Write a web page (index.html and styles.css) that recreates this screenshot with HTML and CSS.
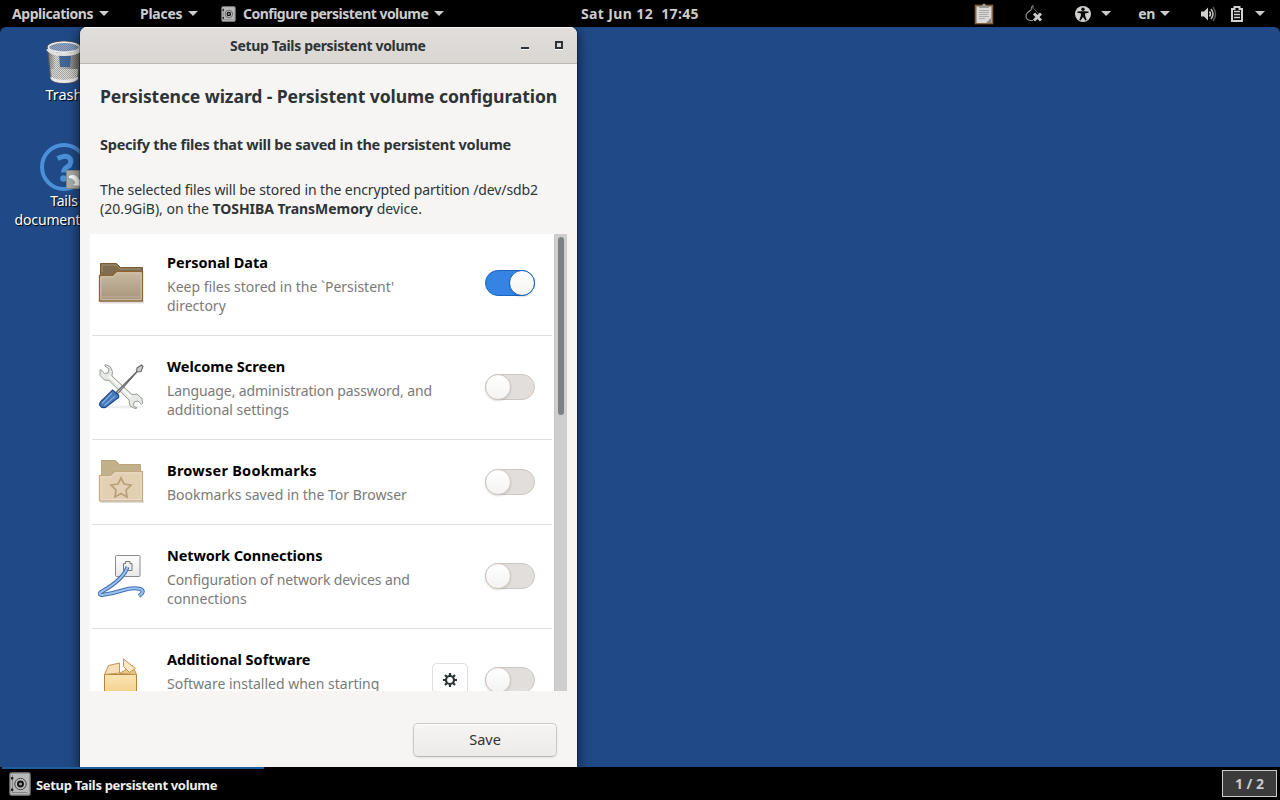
FILE: index.html
```html
<!DOCTYPE html>
<html lang="en">
<head>
<meta charset="utf-8">
<title>Setup Tails persistent volume</title>
<link rel="stylesheet" href="styles.css">
</head>
<body>
<svg width="0" height="0" class="defs">
  <defs>
    <linearGradient id="folder" x2="0" y2="1"><stop stop-color="#c9baa2"/><stop offset="1" stop-color="#a6937a"/></linearGradient>
    <linearGradient id="metal" x2="1" y2="0"><stop stop-color="#777"/><stop offset=".25" stop-color="#e0e0de"/><stop offset=".6" stop-color="#aaa"/><stop offset="1" stop-color="#666"/></linearGradient>
    <linearGradient id="box" x2="0" y2="1"><stop stop-color="#fbe5b4"/><stop offset="1" stop-color="#efc77c"/></linearGradient>
    <linearGradient id="plate" x2="0" y2="1"><stop stop-color="#fff"/><stop offset="1" stop-color="#e7e8e6"/></linearGradient>
    <pattern id="mesh" width="2" height="2" patternUnits="userSpaceOnUse"><path d="M0 0h1v1H0zM1 1h1v1H1z" fill="#555" fill-opacity=".4"/></pattern>
    <symbol id="safe" viewBox="0 0 22 24">
      <rect x="1" y="1" width="20" height="22" rx="1.5" fill="#b9b9b9" stroke="#8b8b8b" stroke-width="1.4"/>
      <path d="M3.500 3v18M3.500 20.500h15" fill="none" stroke="#777" stroke-width=".8"/>
      <circle cx="11.500" cy="12" r="5.700" fill="#bbb" stroke="#444" stroke-width="1"/>
      <circle cx="11.500" cy="12" r="2.500" fill="#999" stroke="#111" stroke-width="1.900"/>
      <path d="M2 5h2.300v2.500H2zM2 16.500h2.300V19H2z" fill="#222"/>
    </symbol>
  </defs>
</svg>

<header class="topbar">
  <span class="menu applications">Applications</span><i class="caret"></i>
  <span class="menu places">Places</span><i class="caret"></i>
  <svg class="app-icon" width="15" height="16"><use href="#safe"/></svg>
  <span class="menu current">Configure persistent volume</span><i class="caret"></i>
  <span class="menu clock">Sat Jun 12&nbsp; 17:45</span>
  <div class="tray">
    <svg width="20" height="22" viewBox="0 0 20 22"><rect x="1.500" y="2.500" width="17" height="18" fill="#bbb" stroke="#876037" stroke-width="1.600"/><path d="M3 4h14v12l-3 4H3z" fill="#d9d9d7"/><path d="M5 7.500h10M5 9.500h10M5 11.500h9M5 13.500h10M5 15.500h6" stroke="#aaa"/><path d="M17 15l-5 5h5z" fill="#888"/><path d="M5 5V3h3q0-2.500 2-2.500T12 3h3v2z" fill="#999b96"/></svg>
    <svg class="tor" width="17" height="17" viewBox="0 0 17 17"><path d="M8 .5Q6 2.500 6 5Q1 8 1 11Q1 15.500 6.500 15.500H8" fill="none" stroke="#999" stroke-width="1.100"/><path d="M8 .5Q8 4 11 6q2.500 2 2.500 3M8 .5L6.500 5" fill="none" stroke="#555"/><path d="M9 8.500l7 7M16 8.500l-7 7" stroke="#ccc" stroke-width="3"/></svg>
    <svg class="access" width="16" height="16" viewBox="0 0 16 16"><circle cx="8" cy="8" r="8" fill="#d0d0ce"/><circle cx="8" cy="3.300" r="1.700"/><path d="M2.500 5.500l4-.2h3l4 .2v1.300l-3.500.7.2 2.500 1.500 4-1.300.6L8 11l-2.400 3.600-1.300-.6 1.500-4 .2-2.500-3.500-.7z"/></svg>
    <i class="caret"></i>
    <span class="menu lang">en</span><i class="caret"></i>
    <svg class="volume" width="17" height="16" viewBox="0 0 17 16"><path d="M1 5.500h3l4-4v13l-4-4H1z" fill="#d0d0ce"/><path d="M9.500 5.500q2 2.500 0 5" fill="none" stroke="#d0d0ce" stroke-width="1.500"/><path d="M11 3q4 5 0 10" fill="none" stroke="#bbb" stroke-width="1.600"/><path d="M13 1q5 7 0 14" fill="none" stroke="#555" stroke-width="1.500"/></svg>
    <svg class="battery" width="12" height="16" viewBox="0 0 12 16"><path d="M1 3h2.500V1h5v2H11v12H1z" fill="none" stroke="#d0d0ce" stroke-width="2"/><path d="M3 5.500h6M3 8.500h6M3 11.500h6" stroke="#d0d0ce" stroke-width="1.500"/></svg>
    <i class="caret"></i>
  </div>
</header>

<main class="desktop">
  <div class="shortcut trash">
    <svg width="36" height="44" viewBox="0 0 36 44"><path d="M1.500 7l3 32q1 4 14 4t14-4L35 7z" fill="url(#metal)" stroke="#555"/><path d="M5 29h27l-1 10q-12 5-25 0z" fill="#d8d8d6"/><path d="M13 14h12l-1 13H14z" fill="#315fa0" opacity=".9"/><path d="M2 10l3 29q12 6 26 0l3-29z" fill="url(#mesh)"/><path d="M4 37q14 6 28 0v2q-4 4-14 4T5 39z" fill="#e8e8e6"/><ellipse cx="18" cy="7" rx="17" ry="6" fill="#8da6c9" stroke="#4c4f4e" stroke-width="1.200"/><ellipse cx="18" cy="7.200" rx="15.500" ry="5" fill="url(#mesh)" stroke="#f0f0ee" stroke-width="1.500"/><path d="M1.500 9q3 5.500 16.500 5.500t17-5.500" fill="none" stroke="#e1e1df" stroke-width="3"/></svg>
    <span>Trash</span>
  </div>
  <div class="shortcut docs">
    <svg width="48" height="48" viewBox="0 0 48 48"><circle cx="24" cy="24" r="22" fill="none" stroke="#4a90d9" stroke-width="4"/><path d="M17.500 15.500q8-4 11.500-1t.5 8q-6 3-6 7" fill="none" stroke="#4a90d9" stroke-width="5"/><circle cx="23.500" cy="35.500" r="3.300" fill="#4a90d9"/><rect x="26.500" y="27.500" width="20" height="18" fill="#aaaea5" stroke="#868a82"/><path d="M29 33q7-3 10 4l2-2v8l-8-1 2.500-2q-2-5-6.500-5z" fill="#fff"/></svg>
    <span>Tails<br>documentation</span>
  </div>

  <section class="window">
    <div class="titlebar">
      <span class="title">Setup Tails persistent volume</span>
      <i class="minimize"></i><i class="maximize"></i>
    </div>
    <div class="intro">
      <h1>Persistence wizard - Persistent volume configuration</h1>
      <h2>Specify the files that will be saved in the persistent volume</h2>
      <p><span class="snug">The selected files will be stored in the encrypted partition /dev/sdb2</span><br><span>(20.9GiB), on the <b>TOSHIBA TransMemory</b> device.</span></p>
    </div>
    <div class="scroller">
      <div class="list">
        <div class="row">
          <svg class="icon" width="48" height="48" viewBox="0 0 48 48"><path d="M2 44.500h44" stroke="#ddd" stroke-width="2"/><path d="M2.500 42V5.500h16l4 4h22V42z" fill="#806d50" stroke="#785a32"/><path d="M4 14V7h14l4 4h21" fill="none" stroke="#a19072"/><path d="M1.500 43V17.500h13l4-4h26V43z" fill="url(#folder)" stroke="#8b6431" stroke-width="1.300"/><path d="M2.800 41.700V18.800h12.400l4-4h24v26.900z" fill="none" stroke="#d5c9b5" stroke-width=".9"/><path d="M4 39h39" stroke="#bfae96"/></svg>
          <div class="copy"><h3>Personal Data</h3><p><span>Keep files stored in the `Persistent'</span><br><span>directory</span></p></div>
          <div class="switch on"><i></i></div>
        </div>
        <div class="row">
          <svg class="icon" width="48" height="48" viewBox="0 0 48 48"><ellipse cx="26" cy="45" rx="20" ry="1.500" fill="#eee"/><path d="M7 2.500l5 2 2.500 5-.5 4.500 20 18.500 5-.5 5 4.500.5 5-1 1-3.500-3.500-4 1-.5 4 3.500 2-2 .5-5-2.500-1-6L11 18.500l-4.500-.5L2 13.500V8l1-.5 3.500 4 3.500-.5L11 7 7 4z" fill="#e6e8e5" stroke="#989c96" stroke-width="1"/><path d="M11 14l22 21" stroke="#fff" stroke-width="1.500"/><path d="M18 30.500L38.500 10l.5-4 4.500-3 1.500 1.500-2 5-4 .5L19.500 32z" fill="#ccc" stroke="#646762" stroke-width="1.100"/><path d="M14.500 28l6 5q1 3-2 4L7.500 45.500q-4 1-6-2.500 0-3 4-6z" fill="#4479bd" stroke="#234d85" stroke-width="1.200"/><path d="M14 31L4 41.500M17 34L6.500 43.500" stroke="#83a9da" stroke-width="1.200"/></svg>
          <div class="copy"><h3>Welcome Screen</h3><p><span class="snug">Language, administration password, and</span><br><span>additional settings</span></p></div>
          <div class="switch"><i></i></div>
        </div>
        <div class="row bookmarks">
          <svg class="icon" width="48" height="48" viewBox="0 0 48 48"><path d="M2 45h44" stroke="#ddd" stroke-width="2"/><path d="M3.500 42V3.500h14l4 4h21V42z" fill="#c2b08b" stroke="#bba77e"/><path d="M1.500 44V18.500h11l4-4h28V44z" fill="#e2cfb4" stroke="#c2aa7e" stroke-width="1.200"/><path d="M3 42.500V20h10l4-4h26v26.500z" fill="none" stroke="#ecdcc7"/><path d="M23 21l3 6 7 1-5 5 1 7-6-3.500-6 3.500 1-7-5-5 7-1z" fill="#e3d0b6" stroke="#b99f78" stroke-width="1.700"/></svg>
          <div class="copy"><h3 class="loose">Browser Bookmarks</h3><p><span>Bookmarks saved in the Tor Browser</span></p></div>
          <div class="switch"><i></i></div>
        </div>
        <div class="row low">
          <svg class="icon" width="48" height="48" viewBox="0 0 48 48"><rect x="17.500" y="2.500" width="24.500" height="21" rx="1" fill="url(#plate)" stroke="#8a8c89"/><path d="M25.500 17.500v-7h2v-2h4.500v2h2v7z" fill="#eee" stroke="#777"/><path d="M29.500 14Q25 27 3 39q-3 3 1 3 9-1 20-4.500t18-1.500q6 2-1 7" fill="none" stroke="#3f70b2" stroke-width="4"/><path d="M29.500 14Q25 27 3 39q-3 3 1 3 9-1 20-4.500t18-1.500q6 2-1 7" fill="none" stroke="#9dc1ee" stroke-width="2"/></svg>
          <div class="copy"><h3 class="snug">Network Connections</h3><p><span class="snug">Configuration of network devices and</span><br><span>connections</span></p></div>
          <div class="switch"><i></i></div>
        </div>
        <div class="row low">
          <svg class="icon" width="48" height="48" viewBox="0 0 48 48"><path d="M6.500 17.500h32v27h-32z" fill="url(#box)" stroke="#ba8435"/><path d="M6.500 17.500l4-9 11-2.500v10z" fill="#f4dfb8" stroke="#c4954e"/><path d="M38.500 17.500l-4-9-13 8z" fill="#e9c78b" stroke="#c4954e"/><path d="M25.500 2l12 9.500-6 4-6-6z" fill="#fae8c5" stroke="#c4954e"/></svg>
          <div class="copy"><h3>Additional Software</h3><p><span>Software installed when starting</span><br>&nbsp;</p></div>
          <div class="gear"><svg width="14" height="14" viewBox="0 0 14 14"><circle cx="7" cy="7" r="4" fill="none" stroke="#2e3436" stroke-width="2.200"/><path d="M7 0v3M7 11v3M0 7h3M11 7h3M2 2l2 2M10 10l2 2M2 12l2-2M10 4l2-2" stroke="#2e3436" stroke-width="2.200"/></svg></div>
          <div class="switch"><i></i></div>
        </div>
      </div>
      <div class="scrollbar"><i></i></div>
    </div>
    <div class="actions"><button><span>Save</span></button></div>
  </section>
</main>

<footer class="taskbar">
  <div class="task"><svg width="22" height="24"><use href="#safe"/></svg><span>Setup Tails persistent volume</span></div>
  <div class="workspace">1 / 2</div>
</footer>
</body>
</html>
```
FILE: styles.css
```css
* { box-sizing: border-box; }
body { margin: 0; width: 1280px; height: 800px; overflow: hidden; background: #000; font: 14.5px/19px "Noto Sans", sans-serif; color: #2e3436; display: flex; flex-direction: column; }
h1, h2, h3, p { margin: 0; }
span { white-space: nowrap; }
.defs { position: absolute; }
svg { display: block; flex: none; }
.snug { letter-spacing: -.1px; }
.loose { letter-spacing: .25px; }

.topbar { height: 27px; flex: none; display: flex; align-items: center; padding-left: 12px; color: #ccc; }
.menu { font-weight: 700; font-size: 14px; line-height: 27px; flex: none; }
.applications { width: 87px; letter-spacing: -.45px; }
.places { width: 43px; letter-spacing: -.25px; margin-right: 5px; }
.current { width: 186px; letter-spacing: -.52px; margin-right: 5px; }
.caret { width: 10px; height: 5px; flex: none; background: #ccc; clip-path: polygon(0 0, 100% 0, 50% 100%); }
.applications + .caret { margin-right: 31px; }
.places + .caret { margin-right: 23px; }
.app-icon { margin-right: 7px; }
.clock { margin-left: 137px; letter-spacing: .4px; }
.clock { letter-spacing: .38px; }
.tray { margin-left: auto; display: flex; align-items: center; padding-right: 15px; }
.tor { margin-left: 31px; }
.access { margin: 0 10px 0 33px; }
.lang { margin: 0 5px 0 27px; letter-spacing: -.3px; }
.volume { margin-left: 30px; }
.battery { margin: 0 12px 0 14px; }

.desktop { height: 740px; flex: none; background: #204a87; border-radius: 6px 6px 0 0; position: relative; overflow: hidden; }
.shortcut { position: absolute; width: 110px; left: 9px; display: flex; flex-direction: column; align-items: center; text-align: center; color: #fff; text-shadow: 1px 1px 1px #000; }
.trash { top: 13px; }
.trash span { margin-top: 1px; }
.docs { top: 116px; font-size: 14px; letter-spacing: -.15px; }

.window { position: absolute; left: 80px; top: 0; width: 497px; height: 740px; background: #f6f5f4; border-radius: 7px 7px 0 0; box-shadow: 0 0 0 1px rgba(0,0,0,.25), 0 3px 12px 2px rgba(0,0,0,.5); display: flex; flex-direction: column; overflow: hidden; }
.titlebar { height: 37px; flex: none; background: linear-gradient(#e1dedb, #dad6d2); border-bottom: 1px solid #bfb8b1; box-shadow: inset 0 1px #f9f8f8; display: flex; align-items: center; padding-left: 150px; }
.title { font-weight: 700; font-size: 14px; width: 196px; letter-spacing: -.33px; }
.minimize { width: 8px; height: 2px; background: #2e3436; margin: 5px 0 0 95px; box-shadow: 0 1px #fff; }
.maximize { width: 8px; height: 8px; border: 2px solid #2e3436; margin: -1px 0 0 26px; box-shadow: 0 1px #fff; }
.intro { height: 170px; flex: none; padding: 20px 20px 0; }
h1 { font-size: 17.6px; line-height: 24px; font-weight: 700; white-space: nowrap; letter-spacing: -.1px; }
h2 { font-size: 14.5px; line-height: 20px; font-weight: 700; margin-top: 26px; white-space: nowrap; letter-spacing: -.24px; }
.intro p { margin-top: 26px; font-size: 14px; }
b { font-weight: 700; letter-spacing: -.05px; }

.scroller { height: 457px; flex: none; margin: 0 10px; display: flex; overflow: hidden; }
.list { width: 464px; background: #fff; padding: 0 2px; overflow: hidden; }
.row { border-bottom: 1px solid #e1e1e1; display: flex; align-items: center; padding: 18px 17px 20px 6px; }
.row:first-child { margin-top: -2px; }
.icon { margin: -5px 21px -3px 0; }
.bookmarks .icon { margin-top: -4px; margin-bottom: -4px; }
.bookmarks .switch { margin-top: 1px; }
.low .icon { margin-top: -3px; margin-bottom: -5px; }
.copy { flex: 1; }
h3 { font-size: 14.5px; line-height: 24px; font-weight: 700; color: #000; margin-bottom: 3px; }
.copy p { color: #7a7a7a; font-size: 14px; }
.switch { width: 50px; height: 26px; border: 1px solid #cdc7c2; border-radius: 13px; background: #e1dedb; display: flex; flex: none; }
.switch i { width: 26px; height: 26px; margin: -1px; border: 1px solid #cdc7c2; border-radius: 13px; background: linear-gradient(#fff, #f4f3f2); box-shadow: 0 1px 2px rgba(0,0,0,.15); }
.switch.on { background: #3584e4; border-color: #1b65bd; justify-content: flex-end; }
.switch.on i { border-color: #1b65bd; }
.gear { width: 36px; height: 34px; border: 1px solid #e1dfdd; border-radius: 5px; display: flex; justify-content: center; align-items: center; margin-right: 17px; }
.scrollbar { width: 13px; background: #cecece; border-left: 1px solid #c8c6c3; padding: 3px 0 0 3px; }
.scrollbar i { display: block; width: 6px; height: 178px; border-radius: 3px; background: #7e8182; }
.actions { display: flex; justify-content: flex-end; padding: 32px 20px 0; }
button { width: 144px; height: 34px; padding: 0 0 2px; border: 1px solid #cdc7c2; border-bottom-color: #bfb8b1; border-radius: 5px; background: linear-gradient(#f6f5f4, #edebe9); color: #2e3436; font: 14.5px "Noto Sans", sans-serif; box-shadow: inset 0 1px #fff, 0 1px 2px rgba(0,0,0,.08); }

.taskbar { height: 33px; flex: none; display: flex; justify-content: space-between; color: #eee; }
.task { width: 262px; margin-left: 2px; border-top: 2px solid #215d9c; padding: 0 0 1px 7px; display: flex; align-items: center; font-weight: 700; font-size: 13px; letter-spacing: -.32px; }
.task svg { margin-right: 5px; }
.task span { padding-top: 2px; }
.workspace { width: 55px; height: 27px; margin: 3px 3px 0 0; border: 1px solid #ccc; background: #3b3b3b; color: #ccc; font-weight: 700; font-size: 14px; text-align: center; line-height: 25px; }
```
